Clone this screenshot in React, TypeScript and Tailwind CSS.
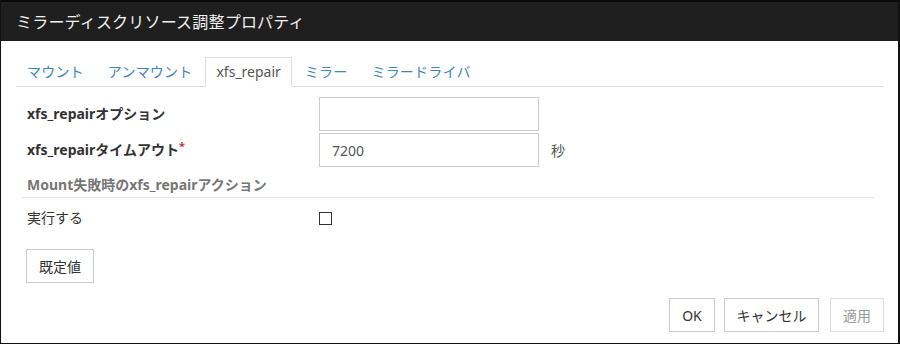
import React from "react";

const font = { fontFamily: '"Noto Sans", "Noto Sans CJK JP", sans-serif' };

export default function App() {
  const tabs = ["マウント", "アンマウント", "xfs_repair", "ミラー", "ミラードライバ"];
  return (
    <div
      style={font}
      className="w-[900px] h-[344px] flex flex-col bg-white border-l border-r-2 border-b border-[#111] text-[14px] text-[#333]"
    >
      <div className="h-[41px] shrink-0 bg-[#1f1f1f] border-t-2 border-[#0a0a0a] flex items-center pl-[15px] text-[16px] tracking-[0.2px] text-[#f2f2f2]">
        ミラーディスクリソース調整プロパティ
      </div>
      <div className="flex flex-col pl-[15px] pr-[14px] pt-[16px] flex-1">
        <div className="flex border-b border-[#ddd]">
          {tabs.map((t, i) => (
            <div
              key={t}
              className={
                i === 2
                  ? "mr-[2px] -mb-px px-[10px] py-[4px] leading-[20px] border border-[#ddd] border-b-white bg-white text-[#555]"
                  : "mr-[2px] -mb-px px-[10px] py-[4px] leading-[20px] border border-transparent text-[#3c86c5] tracking-[0.2px]"
              }
            >
              {t}
            </div>
          ))}
        </div>
        <div className="flex flex-col ml-[6px] mr-[10px]">
          <div className="flex items-center mt-[10px]">
            <div className="w-[297px] pl-[5px] font-bold leading-[20px]">xfs_repairオプション</div>
            <div className="w-[220px] h-[34px] border border-[#ccc]" />
          </div>
          <div className="flex items-center mt-[2px]">
            <div className="w-[297px] pl-[5px] font-bold leading-[20px]">
              xfs_repairタイムアウト<span className="text-[#c9302c] align-top text-[11px] leading-[12px]">*</span>
            </div>
            <div className="w-[220px] h-[34px] border border-[#ccc] flex items-center pl-[12px] text-[#555]">7200</div>
            <div className="ml-[12px] text-[#555]">秒</div>
          </div>
          <div className="mt-[8px] pb-[2px] pl-[5px] border-b border-[#e5e5e5] font-bold text-[#777] leading-[20px]">
            Mount失敗時のxfs_repairアクション
          </div>
          <div className="flex items-center mt-[10px]">
            <div className="w-[297px] pl-[5px] leading-[20px]">実行する</div>
            <div className="w-[13px] h-[13px] border border-[#333] bg-white" />
          </div>
          <div className="mt-[21px] ml-[4px]">
            <div className="w-[68px] h-[34px] border border-[#ccc] flex items-center justify-center">既定値</div>
          </div>
        </div>
        <div className="flex justify-end mt-[15px]">
          <div className="w-[46px] h-[34px] border border-[#ccc] flex items-center justify-center">OK</div>
          <div className="ml-[9px] w-[95px] h-[34px] border border-[#ccc] flex items-center justify-center">キャンセル</div>
          <div className="ml-[11px] w-[54px] h-[34px] border border-[#ddd] flex items-center justify-center text-[#999]">適用</div>
        </div>
      </div>
    </div>
  );
}
